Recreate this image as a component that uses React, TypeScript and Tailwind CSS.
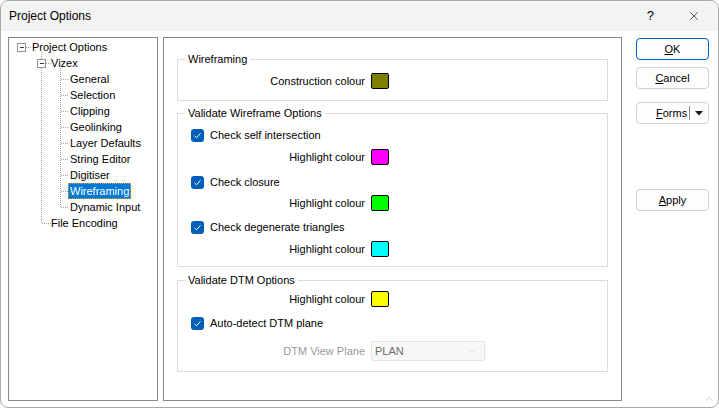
import React from 'react';
import { X, ChevronDown, ChevronUp } from 'lucide-react';

const treeItems = [
  { label: 'Project Options', pad: 'pl-[21px]' },
  { label: 'Vizex', pad: 'pl-[40px]' },
  { label: 'General', pad: 'pl-[59px]' },
  { label: 'Selection', pad: 'pl-[59px]' },
  { label: 'Clipping', pad: 'pl-[59px]' },
  { label: 'Geolinking', pad: 'pl-[59px]' },
  { label: 'Layer Defaults', pad: 'pl-[59px]' },
  { label: 'String Editor', pad: 'pl-[59px]' },
  { label: 'Digitiser', pad: 'pl-[59px]' },
  { label: 'Wireframing', pad: 'pl-[59px]', selected: true },
  { label: 'Dynamic Input', pad: 'pl-[59px]' },
  { label: 'File Encoding', pad: 'pl-[40px]' },
];

const TreeLines = () => (
  <svg className="absolute left-0 top-0" width="148" height="362" shapeRendering="crispEdges">
    <g stroke="#a0a0a0" strokeDasharray="1 1" fill="none">
      <line x1="17" y1="9.5" x2="23" y2="9.5" />
      <line x1="32.5" y1="14" x2="32.5" y2="186" />
      <line x1="37" y1="25.5" x2="42" y2="25.5" />
      <line x1="33" y1="185.5" x2="42" y2="185.5" />
      <line x1="51.5" y1="30" x2="51.5" y2="170" />
      {[0, 1, 2, 3, 4, 5, 6, 7, 8].map(k => (
        <line key={k} x1="52" y1={41.5 + 16 * k} x2="60" y2={41.5 + 16 * k} />
      ))}
    </g>
    <g stroke="#919191" fill="#fff">
      <rect x="8.5" y="5.5" width="8" height="8" />
      <rect x="28.5" y="21.5" width="8" height="8" />
    </g>
    <g stroke="#3c3c3c">
      <line x1="10.5" y1="9.5" x2="15" y2="9.5" />
      <line x1="30.5" y1="25.5" x2="35" y2="25.5" />
    </g>
  </svg>
);

const Swatch = ({ color }: { color: string }) => (
  <div className={`w-[18px] h-[16px] border border-black rounded-[2px] ${color}`} />
);

const ColourRow = ({ label, color, mt }: { label: string; color: string; mt: string }) => (
  <div className={`flex items-center h-[16px] ${mt}`}>
    <div className="w-[180px] text-right">{label}</div>
    <div className="ml-[6px]">
      <Swatch color={color} />
    </div>
  </div>
);

const CheckRow = ({ label, mt }: { label: string; mt: string }) => (
  <div className={`flex items-center h-[16px] ml-[6px] ${mt}`}>
    <div className="w-[13px] h-[13px] rounded-[3px] bg-[#005fb8] flex items-center justify-center">
      <svg width="9" height="9" viewBox="0 0 9 9">
        <path d="M1.5 4.8 L3.5 6.8 L7.5 2.3" stroke="#fff" strokeWidth="1" fill="none" />
      </svg>
    </div>
    <span className="ml-[6px]">{label}</span>
  </div>
);

const Button = ({ children, mt, focused }: { children: React.ReactNode; mt: string; focused?: boolean }) => (
  <div
    className={`w-[73px] h-[22px] rounded-[4px] bg-[#fdfdfd] border flex items-center justify-center ${mt} ${
      focused ? 'border-[#005fb8]' : 'border-[#d0d0d0]'
    }`}
  >
    {children}
  </div>
);

export default function App() {
  return (
    <div className="w-[719px] h-[408px] bg-white font-['Liberation_Sans',Arial,sans-serif] text-[11px] text-black">
      <div className="relative w-[719px] h-[408px] border border-[#a8a8a8] rounded-[8px] overflow-hidden bg-white">
        {/* Title bar */}
        <div className="h-[30px] bg-[#f3f3f3] flex items-center pl-[8px]">
          <span className="text-[12px]">Project Options</span>
          <span className="ml-auto mr-[33px] text-[13px]">?</span>
          <X className="w-[14px] h-[14px] mr-[17px]" strokeWidth={1.1} />
        </div>

        {/* Body */}
        <div className="flex pl-[7px] pt-[6px]">
          {/* Tree */}
          <div className="relative w-[150px] h-[364px] border border-[#828790] bg-white">
            <TreeLines />
            <div className="relative pt-[1px]">
              {treeItems.map(item => (
                <div key={item.label} className={`h-[16px] flex ${item.pad}`}>
                  <span
                    className={`px-[1px] leading-[14px] border ${
                      item.selected ? 'bg-[#0078d7] text-white border-dotted border-[#f0a030]' : 'border-transparent'
                    }`}
                  >
                    {item.label}
                  </span>
                </div>
              ))}
            </div>
          </div>

          {/* Main panel */}
          <div className="ml-[5px] w-[459px] h-[364px] border border-[#828790] bg-white">
            <fieldset className="ml-[13px] mt-[13px] w-[431px] border border-[#dcdcdc] pl-[7px] pb-[11px]">
              <legend className="px-[3px] leading-[16px]">Wireframing</legend>
              <ColourRow label="Construction colour" color="bg-[#808000]" mt="mt-[6px]" />
            </fieldset>

            <fieldset className="ml-[13px] mt-[4px] w-[431px] border border-[#dcdcdc] pl-[7px] pb-[9px]">
              <legend className="px-[3px] leading-[16px]">Validate Wireframe Options</legend>
              <CheckRow label="Check self intersection" mt="mt-[6px]" />
              <ColourRow label="Highlight colour" color="bg-[#ff00ff]" mt="mt-[6px]" />
              <CheckRow label="Check closure" mt="mt-[9px]" />
              <ColourRow label="Highlight colour" color="bg-[#00ff00]" mt="mt-[5px]" />
              <CheckRow label="Check degenerate triangles" mt="mt-[8px]" />
              <ColourRow label="Highlight colour" color="bg-[#00ffff]" mt="mt-[6px]" />
            </fieldset>

            <fieldset className="ml-[13px] mt-[5px] w-[431px] border border-[#dcdcdc] pl-[7px] pb-[10px]">
              <legend className="px-[3px] leading-[16px]">Validate DTM Options</legend>
              <ColourRow label="Highlight colour" color="bg-[#ffff00]" mt="mt-[3px]" />
              <CheckRow label="Auto-detect DTM plane" mt="mt-[8px]" />
              <div className="flex items-center h-[20px] mt-[10px]">
                <div className="w-[180px] text-right text-[#9a9a9a]">DTM View Plane</div>
                <div className="ml-[6px] w-[114px] h-[20px] border border-[#e3e3e3] bg-[#f7f7f7] rounded-[2px] flex items-center pl-[3px] pr-[6px] text-[#6d6d6d]">
                  <span>PLAN</span>
                  <ChevronDown className="ml-auto w-[12px] h-[12px] text-[#b0b0b0]" strokeWidth={1} />
                </div>
              </div>
            </fieldset>
          </div>

          {/* Buttons */}
          <div className="ml-[14px] pt-[1px] flex flex-col">
            <Button mt="mt-0" focused>
              <span><span className="underline">O</span>K</span>
            </Button>
            <Button mt="mt-[7px]">
              <span><span className="underline">C</span>ancel</span>
            </Button>
            <div className="w-[73px] h-[22px] mt-[13px] rounded-[4px] bg-[#fdfdfd] border border-[#d0d0d0] flex items-center">
              <span className="ml-[19px]"><span className="underline">F</span>orms</span>
              <div className="ml-auto w-px h-[14px] bg-[#8a8a8a]" />
              <svg className="mx-[5px]" width="8" height="5" viewBox="0 0 8 5">
                <path d="M0 0 H8 L4 4.5 Z" fill="#1a1a1a" />
              </svg>
            </div>
            <Button mt="mt-[65px]">
              <span><span className="underline">A</span>pply</span>
            </Button>
          </div>
        </div>

        <ChevronUp className="absolute right-[3px] bottom-[2px] w-[12px] h-[12px] text-[#8a8a8a]" strokeWidth={1} />
      </div>
    </div>
  );
}
